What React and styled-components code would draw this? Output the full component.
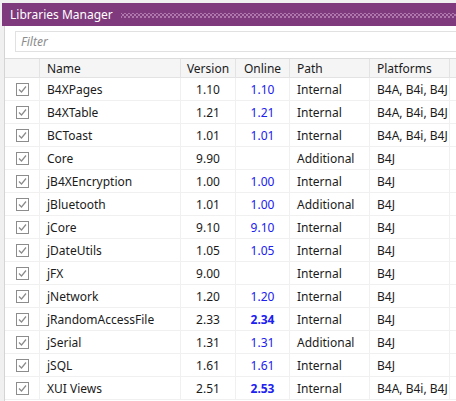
import React from 'react';
import styled, { createGlobalStyle } from 'styled-components';

const GlobalStyle = createGlobalStyle`
  html, body {
    margin: 0;
    padding: 0;
    background: #f0f0f0;
    overflow: hidden;
  }
  body {
    font-family: "Noto Sans", "Open Sans", sans-serif;
    font-size: 12px;
    color: #1b1b1b;
  }
`;

const Window = styled.div`
  width: 456px;
  height: 401px;
  padding: 3px 0 0 2px;
  box-sizing: border-box;
  display: flex;
  flex-direction: column;
  overflow: hidden;
`;

const TitleBar = styled.div`
  height: 23px;
  background: #7e3a7c;
  display: flex;
  align-items: center;
  padding-left: 8px;
  gap: 8px;
  color: #fff;
  font-size: 12px;
  flex-shrink: 0;
`;

const Grip = styled.div`
  flex: 1;
  height: 5px;
  margin-top: 1px;
  background-image:
    radial-gradient(circle, #b27cb0 0.7px, transparent 0.8px),
    radial-gradient(circle, #b27cb0 0.7px, transparent 0.8px);
  background-size: 4px 4px;
  background-position: 0 0, 2px 2px;
`;

const Panel = styled.div`
  flex: 1;
  margin-left: 2px;
  background: #fff;
  border-left: 1px solid #d4d4d4;
  display: flex;
  flex-direction: column;
`;

const FilterBox = styled.div`
  margin: 5px 0 6px 10px;
  height: 21px;
  border: 1px solid #e1e1e1;
  border-right: none;
  box-sizing: border-box;
  display: flex;
  align-items: center;
  padding-left: 5px;
  color: #8b8b8b;
  font-style: italic;
`;

const Grid = styled.div`
  display: grid;
  grid-template-columns: 35px 141px 55px 54px 80px 80px 1fr;
  border-top: 1px solid #dcdcdc;
`;

const Cell = styled.div`
  height: ${({ $head }) => ($head ? '19px' : '23px')};
  box-sizing: border-box;
  border-right: 1px solid ${({ $head }) => ($head ? '#e3e3e3' : '#f0f0f0')};
  border-bottom: 1px solid ${({ $head }) => ($head ? '#e3e3e3' : '#f0f0f0')};
  background: ${({ $head }) => ($head ? '#f5f5f5' : '#fff')};
  display: flex;
  align-items: center;
  justify-content: ${({ $align }) => $align || 'flex-start'};
  padding: 0 ${({ $align }) => ($align ? '0' : '7px')};
  white-space: nowrap;
  overflow: hidden;
  color: ${({ $online }) => ($online ? '#2020f0' : 'inherit')};
  font-weight: ${({ $bold }) => ($bold ? 700 : 400)};
`;

const Box = styled.div`
  width: 13px;
  height: 13px;
  border: 1px solid #8c8c8c;
  box-sizing: border-box;
  display: flex;
  align-items: center;
  justify-content: center;
`;

const CheckBox = () => (
  <Box>
    <svg width="11" height="11" viewBox="0 0 11 11">
      <polyline points="2,5.5 4.5,8 9,2.5" fill="none" stroke="#8a8a8a" strokeWidth="1.2" />
    </svg>
  </Box>
);

const libs = [
  ['B4XPages', '1.10', '1.10', 'Internal', 'B4A, B4i, B4J'],
  ['B4XTable', '1.21', '1.21', 'Internal', 'B4A, B4i, B4J'],
  ['BCToast', '1.01', '1.01', 'Internal', 'B4A, B4i, B4J'],
  ['Core', '9.90', '', 'Additional', 'B4J'],
  ['jB4XEncryption', '1.00', '1.00', 'Internal', 'B4J'],
  ['jBluetooth', '1.01', '1.00', 'Additional', 'B4J'],
  ['jCore', '9.10', '9.10', 'Internal', 'B4J'],
  ['jDateUtils', '1.05', '1.05', 'Internal', 'B4J'],
  ['jFX', '9.00', '', 'Internal', 'B4J'],
  ['jNetwork', '1.20', '1.20', 'Internal', 'B4J'],
  ['jRandomAccessFile', '2.33', '2.34', 'Internal', 'B4J', true],
  ['jSerial', '1.31', '1.31', 'Additional', 'B4J'],
  ['jSQL', '1.61', '1.61', 'Internal', 'B4J'],
  ['XUI Views', '2.51', '2.53', 'Internal', 'B4A, B4i, B4J', true],
];

export default function App() {
  return (
    <>
      <GlobalStyle />
      <Window>
        <TitleBar>
          <span>Libraries Manager</span>
          <Grip />
        </TitleBar>
        <Panel>
          <FilterBox>Filter</FilterBox>
          <Grid>
            <Cell $head />
            <Cell $head>Name</Cell>
            <Cell $head $align="center">Version</Cell>
            <Cell $head $align="center">Online</Cell>
            <Cell $head>Path</Cell>
            <Cell $head>Platforms</Cell>
            <Cell $head />
            {libs.map(([name, ver, online, path, platforms, newer]) => (
              <React.Fragment key={name}>
                <Cell $align="center"><CheckBox /></Cell>
                <Cell>{name}</Cell>
                <Cell $align="center">{ver}</Cell>
                <Cell $align="center" $online $bold={newer}>{online}</Cell>
                <Cell>{path}</Cell>
                <Cell>{platforms}</Cell>
                <Cell />
              </React.Fragment>
            ))}
          </Grid>
        </Panel>
      </Window>
    </>
  );
}
